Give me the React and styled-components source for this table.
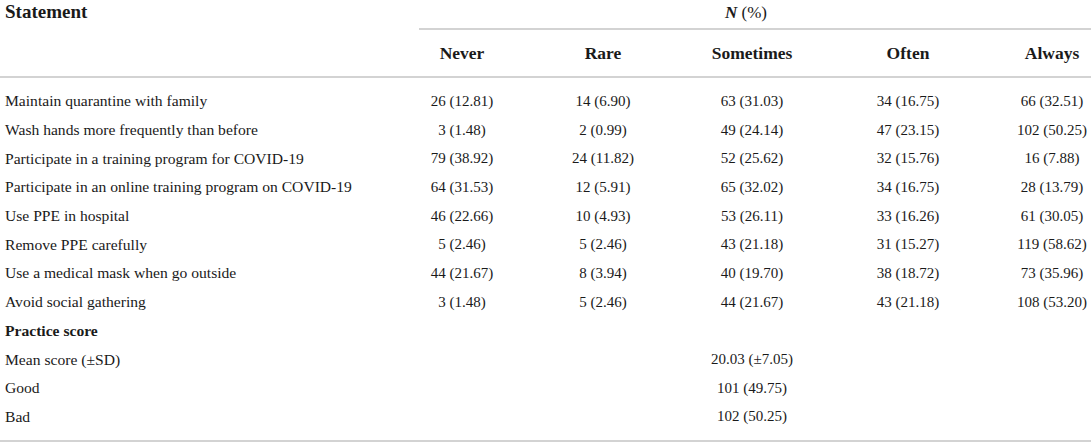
import React from "react";
import styled, { createGlobalStyle } from "styled-components";

const Global = createGlobalStyle`
  html, body { margin: 0; padding: 0; background: #fff; }
  body { font-family: "Liberation Serif", serif; color: #1a1a1a; }
`;

const COLS = "419px 86px 196px 102px 210px 78px";

const Table = styled.div`
  width: 1091px;
  font-family: "Liberation Serif", "Times New Roman", serif;
  color: #1a1a1a;
`;

const Head = styled.div`
  display: grid;
  grid-template-columns: ${COLS};
  grid-template-rows: 30px 46px;
  border-bottom: 2px solid #d3d3d3;
`;

const StatementHead = styled.div`
  grid-row: 1 / span 2;
  grid-column: 1;
  padding: 1px 0 0 5px;
  font-size: 19px;
  font-weight: 700;
  line-height: 22px;
`;

const GroupHead = styled.div`
  grid-row: 1;
  grid-column: 2 / span 5;
  border-bottom: 2px solid #d3d3d3;
  text-align: center;
  font-size: 17px;
  line-height: 26px;
  padding-right: 18px;
  em { font-style: italic; font-weight: 700; }
`;

const ColHead = styled.div`
  grid-row: 2;
  display: flex;
  align-items: center;
  justify-content: center;
  font-size: 17.5px;
  font-weight: 700;
  white-space: nowrap;
`;

const Body = styled.div`
  padding: 9px 0 9px;
  border-bottom: 2px solid #d3d3d3;
`;

const Row = styled.div`
  display: grid;
  grid-template-columns: ${COLS};
  height: 28.7px;
  align-items: center;
`;

const Label = styled.div`
  padding-left: 5px;
  font-size: 15.6px;
  font-weight: ${(p) => (p.$bold ? 700 : 400)};
  white-space: nowrap;
`;

const Cell = styled.div`
  text-align: center;
  font-size: 15px;
  white-space: nowrap;
  grid-column: ${(p) => p.$col || "auto"};
`;

const headers = ["Never", "Rare", "Sometimes", "Often", "Always"];

const rows = [
  ["Maintain quarantine with family", "26 (12.81)", "14 (6.90)", "63 (31.03)", "34 (16.75)", "66 (32.51)"],
  ["Wash hands more frequently than before", "3 (1.48)", "2 (0.99)", "49 (24.14)", "47 (23.15)", "102 (50.25)"],
  ["Participate in a training program for COVID-19", "79 (38.92)", "24 (11.82)", "52 (25.62)", "32 (15.76)", "16 (7.88)"],
  ["Participate in an online training program on COVID-19", "64 (31.53)", "12 (5.91)", "65 (32.02)", "34 (16.75)", "28 (13.79)"],
  ["Use PPE in hospital", "46 (22.66)", "10 (4.93)", "53 (26.11)", "33 (16.26)", "61 (30.05)"],
  ["Remove PPE carefully", "5 (2.46)", "5 (2.46)", "43 (21.18)", "31 (15.27)", "119 (58.62)"],
  ["Use a medical mask when go outside", "44 (21.67)", "8 (3.94)", "40 (19.70)", "38 (18.72)", "73 (35.96)"],
  ["Avoid social gathering", "3 (1.48)", "5 (2.46)", "44 (21.67)", "43 (21.18)", "108 (53.20)"],
];

const score = [
  ["Mean score (\u00b1SD)", "20.03 (\u00b17.05)"],
  ["Good", "101 (49.75)"],
  ["Bad", "102 (50.25)"],
];

export default function App() {
  return (
    <>
      <Global />
      <Table>
        <Head>
          <StatementHead>Statement</StatementHead>
          <GroupHead>
            <em>N</em> (%)
          </GroupHead>
          {headers.map((h) => (
            <ColHead key={h}>{h}</ColHead>
          ))}
        </Head>
        <Body>
          {rows.map((r) => (
            <Row key={r[0]}>
              <Label>{r[0]}</Label>
              {r.slice(1).map((v, i) => (
                <Cell key={i}>{v}</Cell>
              ))}
            </Row>
          ))}
          <Row>
            <Label $bold>Practice score</Label>
          </Row>
          {score.map((s) => (
            <Row key={s[0]}>
              <Label>{s[0]}</Label>
              <Cell $col="4">{s[1]}</Cell>
            </Row>
          ))}
        </Body>
      </Table>
    </>
  );
}
